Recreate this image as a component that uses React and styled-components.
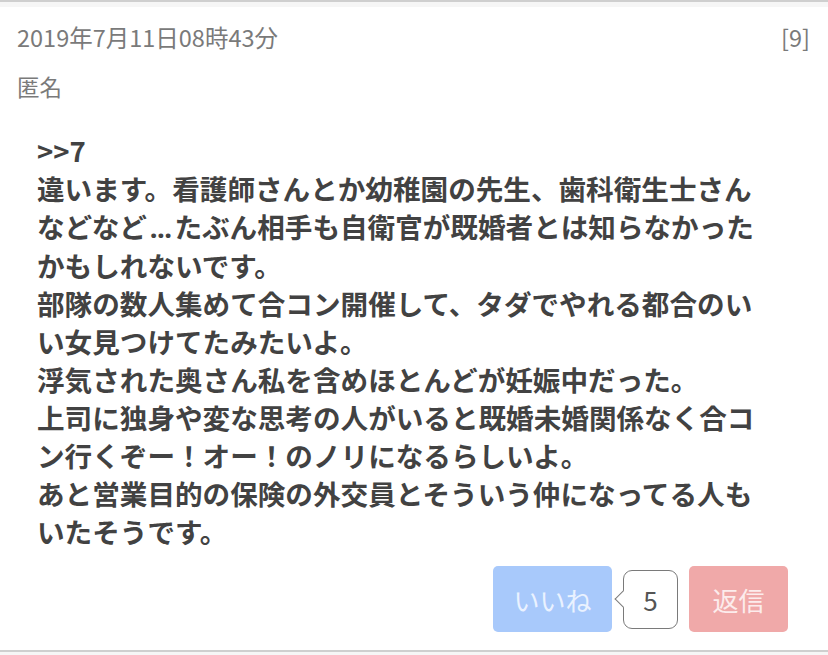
import React from "react";
import styled, { createGlobalStyle } from "styled-components";

const GlobalStyle = createGlobalStyle`
  html, body { margin: 0; padding: 0; background: #f6f6f6; }
  body { font-family: "Noto Sans CJK JP", "Noto Sans", sans-serif; }
`;

const Page = styled.div`
  width: 828px;
  height: 655px;
  overflow: hidden;
  background: #f6f6f6;
`;

const TopRule = styled.div`
  height: 2px;
  background: #cfcfcf;
  margin-bottom: 5px;
`;

const Card = styled.article`
  background: #fff;
  border-bottom: 2px solid #cfcfcf;
  padding: 14px 18px 18px 17px;
`;

const Header = styled.div`
  display: flex;
  justify-content: space-between;
  align-items: center;
  font-size: 23.5px;
  line-height: 32px;
  color: #7a7a7a;
`;

const Author = styled.div`
  margin-top: 17px;
  font-size: 22.5px;
  line-height: 32px;
  color: #7a7a7a;
`;

const Body = styled.div`
  margin: 29px 0 0 20px;
  font-size: 27.6px;
  line-height: 38px;
  font-weight: 700;
  color: #424242;
  white-space: nowrap;
`;

const Line = styled.div``;

const Ellipsis = styled.span`
  display: inline-block;
  width: 1em;
  font-family: "Noto Sans", sans-serif;
  text-align: center;
  letter-spacing: -0.02em;
`;

const Actions = styled.div`
  display: flex;
  justify-content: flex-end;
  align-items: center;
  margin-top: 16px;
  padding-right: 22px;
`;

const ActionButton = styled.button`
  border: none;
  border-radius: 5px;
  height: 66px;
  width: ${(p) => p.$w}px;
  background: ${(p) => p.$bg};
  color: ${(p) => p.$fg};
  font-family: inherit;
  font-size: 26px;
  padding: 0;
  cursor: pointer;
`;

const Count = styled.div`
  position: relative;
  box-sizing: border-box;
  width: 55px;
  height: 59px;
  margin: 0 11px;
  border: 1.5px solid #7a7a7a;
  border-radius: 9px;
  background: #fff;
  display: flex;
  align-items: center;
  justify-content: center;
  font-size: 26px;
  color: #555;

  &::before {
    content: "";
    position: absolute;
    left: -7px;
    top: 50%;
    width: 11px;
    height: 11px;
    background: #fff;
    border-left: 1.5px solid #7a7a7a;
    border-bottom: 1.5px solid #7a7a7a;
    transform: translateY(-50%) rotate(45deg);
  }
`;

const lines = [
  ">>7",
  "違います。看護師さんとか幼稚園の先生、歯科衛生士さん",
  <>
    などなど<Ellipsis>...</Ellipsis>たぶん相手も自衛官が既婚者とは知らなかった
  </>,
  "かもしれないです。",
  "部隊の数人集めて合コン開催して、タダでやれる都合のい",
  "い女見つけてたみたいよ。",
  "浮気された奥さん私を含めほとんどが妊娠中だった。",
  "上司に独身や変な思考の人がいると既婚未婚関係なく合コ",
  "ン行くぞー！オー！のノリになるらしいよ。",
  "あと営業目的の保険の外交員とそういう仲になってる人も",
  "いたそうです。",
];

export default function App() {
  return (
    <Page>
      <GlobalStyle />
      <TopRule />
      <Card>
        <Header>
          <span>2019年7月11日08時43分</span>
          <span>[9]</span>
        </Header>
        <Author>匿名</Author>
        <Body>
          {lines.map((l, i) => (
            <Line key={i}>{l}</Line>
          ))}
        </Body>
        <Actions>
          <ActionButton $w={119} $bg="#a8c9fb" $fg="#eaf2ff">いいね</ActionButton>
          <Count>5</Count>
          <ActionButton $w={99} $bg="#f0a9a9" $fg="#fcecec">返信</ActionButton>
        </Actions>
      </Card>
    </Page>
  );
}
